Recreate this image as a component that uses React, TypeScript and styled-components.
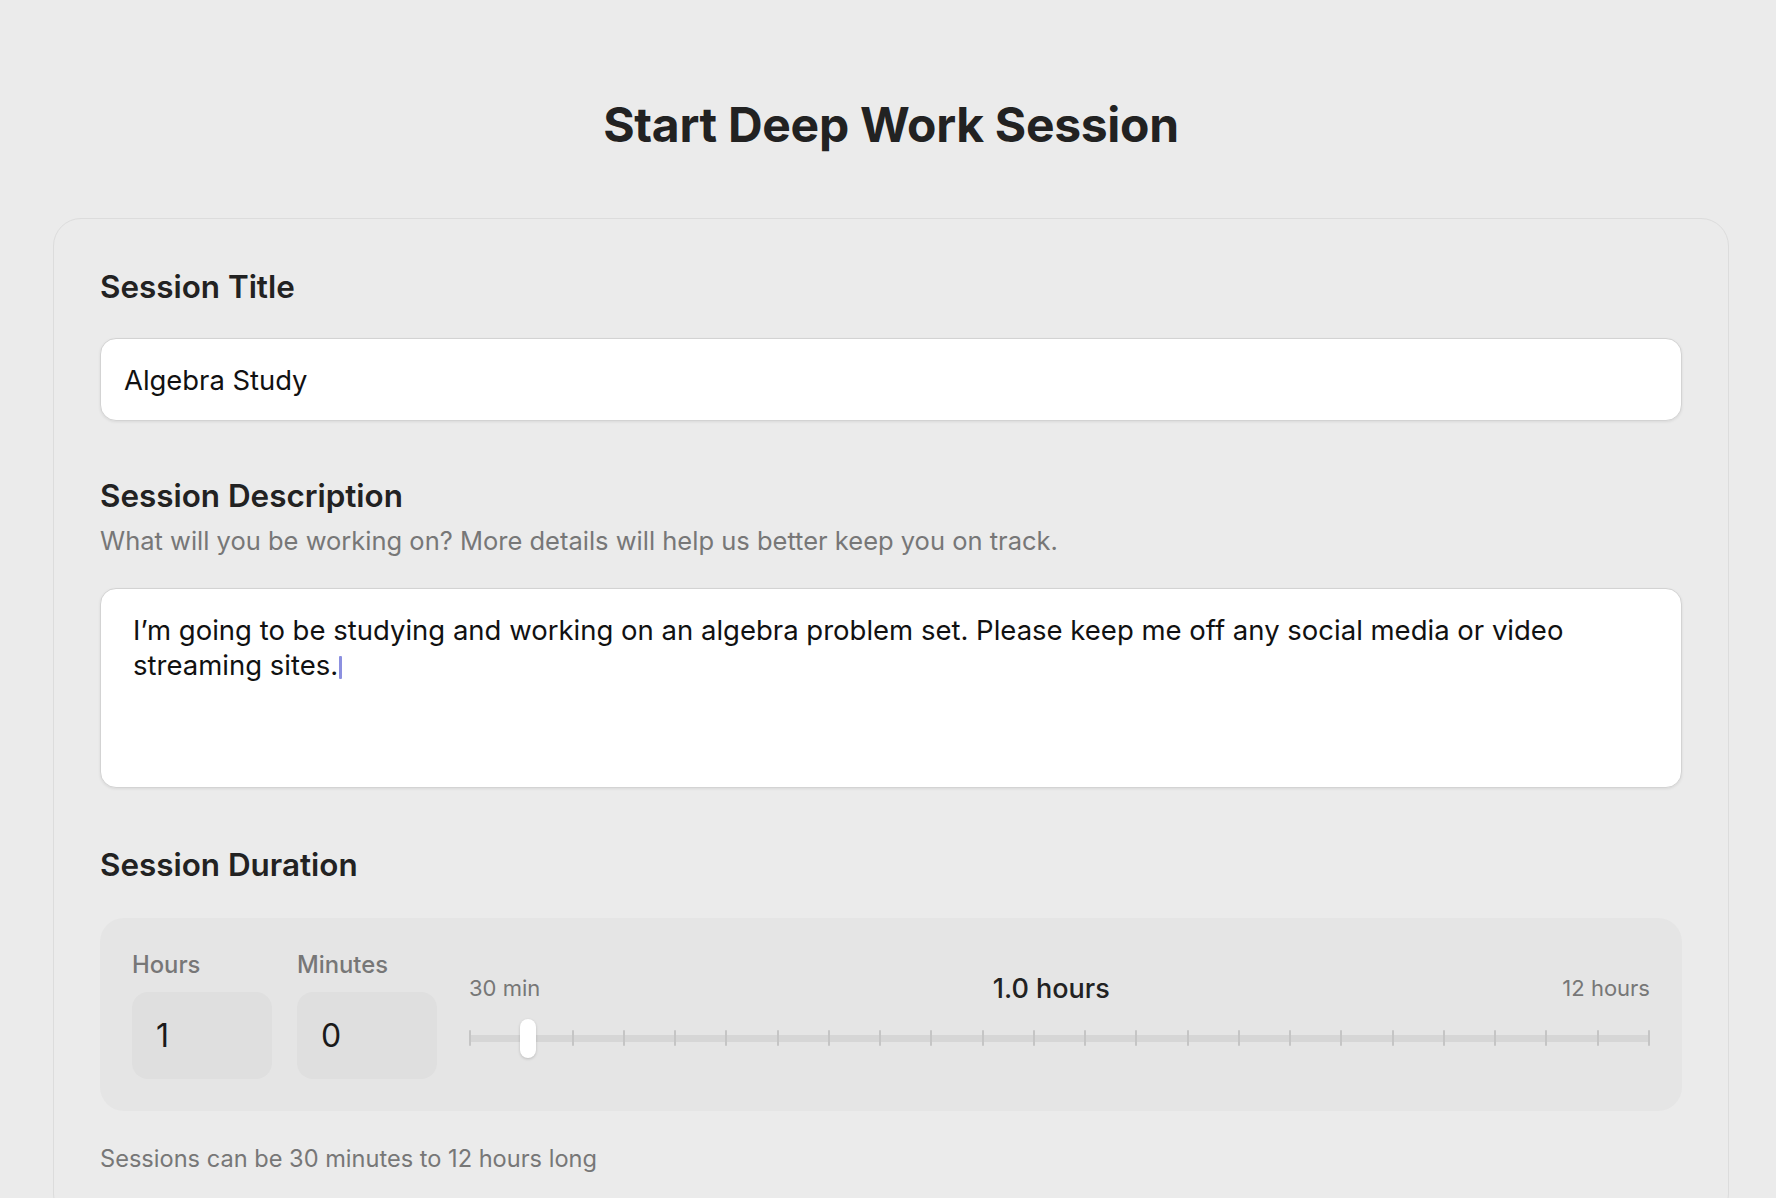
import React, { useState } from 'react';
import styled, { createGlobalStyle } from 'styled-components';

const GlobalStyle = createGlobalStyle`
  html, body {
    margin: 0;
    padding: 0;
    background: #ebebeb;
  }
  body {
    font-family: Inter, "Noto Sans", "Liberation Sans", sans-serif;
    color: #222;
    -webkit-font-smoothing: antialiased;
  }
  * {
    box-sizing: border-box;
  }
`;

const Page = styled.main`
  padding: 96px 47px 0 53px;
`;

const Heading = styled.h1`
  margin: 0;
  text-align: center;
  font-size: 48px;
  line-height: 58px;
  font-weight: 700;
  color: #222;
  letter-spacing: -0.3px;
`;

const Card = styled.section`
  margin-top: 64px;
  border: 1px solid #dcdcdc;
  border-radius: 28px;
  padding: 49px 46px 48px;
`;

const Field = styled.div<{ $gap?: number }>`
  margin-bottom: ${props => props.$gap ?? 56}px;
`;

const LabelBlock = styled.div<{ $space: number }>`
  margin-bottom: ${props => props.$space}px;
`;

const Label = styled.label`
  display: block;
  font-size: 31.4px;
  line-height: 38px;
  font-weight: 600;
  color: #222;
`;

const Hint = styled.p`
  margin: 11px 0 0;
  font-size: 25.5px;
  line-height: 29px;
  color: #777;
`;

const TextInput = styled.input`
  display: block;
  width: 100%;
  height: 83px;
  padding: 0 23px;
  border: 1px solid #d3d3d3;
  border-radius: 16px;
  background: #fff;
  box-shadow: 0 1px 3px rgba(0, 0, 0, 0.08);
  font: 400 27.4px/1 Inter, "Noto Sans", sans-serif;
  color: #111;
  outline: none;
`;

const TextArea = styled.div`
  min-height: 200px;
  padding: 24px 32px;
  border: 1px solid #d3d3d3;
  border-radius: 16px;
  background: #fff;
  box-shadow: 0 1px 3px rgba(0, 0, 0, 0.08);
  font-size: 27.5px;
  line-height: 34.5px;
  color: #111;
`;

const Caret = styled.span`
  display: inline-block;
  width: 3px;
  height: 23px;
  margin-left: 1px;
  vertical-align: -4px;
  border-radius: 1px;
  background: #8c90e0;
`;

const DurationPanel = styled.div`
  display: flex;
  align-items: center;
  padding: 32px;
  background: #e5e5e5;
  border-radius: 24px;
`;

const NumberGroup = styled.div`
  display: flex;
  gap: 25px;
`;

const NumberField = styled.div`
  display: flex;
  flex-direction: column;
  width: 140px;
`;

const SmallLabel = styled.label`
  font-size: 23.8px;
  line-height: 29px;
  font-weight: 500;
  color: #777;
  margin-bottom: 13px;
`;

const NumberBox = styled.input`
  width: 140px;
  height: 87px;
  padding: 0 24px;
  border: none;
  border-radius: 16px;
  background: #dfdfdf;
  font: 400 32px/1 Inter, "Noto Sans", sans-serif;
  color: #1a1a1a;
  outline: none;
`;

const SliderColumn = styled.div`
  flex: 1;
  margin-left: 32px;
`;

const SliderHead = styled.div`
  display: flex;
  justify-content: space-between;
  align-items: center;
  height: 33px;
  margin-bottom: 14px;
`;

const RangeEnd = styled.span`
  font-size: 22px;
  color: #777;
`;

const Current = styled.span`
  font-size: 27px;
  font-weight: 500;
  color: #222;
`;

const Track = styled.div`
  position: relative;
  display: flex;
  justify-content: space-between;
  align-items: center;
  height: 39px;
  background: linear-gradient(#d6d6d6, #d6d6d6) center / 100% 7px no-repeat;
`;

const Tick = styled.span`
  width: 2px;
  height: 16px;
  border-radius: 1px;
  background: #c5c5c5;
`;

const Thumb = styled.span`
  position: absolute;
  top: 0;
  width: 16px;
  height: 39px;
  border-radius: 8px;
  background: #fff;
  box-shadow: 0 1px 3px rgba(0, 0, 0, 0.18);
`;

const Footnote = styled.p`
  margin: 33px 0 0;
  font-size: 23.6px;
  line-height: 29px;
  color: #777;
`;

const STEPS = 24; // 30 min .. 12 h in half-hour steps

export default function App() {
  const [title, setTitle] = useState('Algebra Study');
  const [hours, setHours] = useState('1');
  const [minutes, setMinutes] = useState('0');

  const total = (Number(hours) || 0) + (Number(minutes) || 0) / 60;
  const index = Math.min(Math.max(Math.round(total * 2) - 1, 0), STEPS - 1);
  const frac = index / (STEPS - 1);

  return (
    <>
      <GlobalStyle />
      <Page>
        <Heading>Start Deep Work Session</Heading>
        <Card>
          <Field>
            <LabelBlock $space={32}>
              <Label htmlFor="title">Session Title</Label>
            </LabelBlock>
            <TextInput id="title" value={title} onChange={e => setTitle(e.target.value)} />
          </Field>

          <Field $gap={58}>
            <LabelBlock $space={33}>
              <Label>Session Description</Label>
              <Hint>What will you be working on? More details will help us better keep you on track.</Hint>
            </LabelBlock>
            <TextArea>
              I’m going to be studying and working on an algebra problem set. Please keep me off any social media or video streaming sites.<Caret />
            </TextArea>
          </Field>

          <Field $gap={0}>
            <LabelBlock $space={34}>
              <Label>Session Duration</Label>
            </LabelBlock>
            <DurationPanel>
              <NumberGroup>
                <NumberField>
                  <SmallLabel htmlFor="hours">Hours</SmallLabel>
                  <NumberBox id="hours" value={hours} onChange={e => setHours(e.target.value)} />
                </NumberField>
                <NumberField>
                  <SmallLabel htmlFor="minutes">Minutes</SmallLabel>
                  <NumberBox id="minutes" value={minutes} onChange={e => setMinutes(e.target.value)} />
                </NumberField>
              </NumberGroup>
              <SliderColumn>
                <SliderHead>
                  <RangeEnd>30 min</RangeEnd>
                  <Current>{total.toFixed(1)} hours</Current>
                  <RangeEnd>12 hours</RangeEnd>
                </SliderHead>
                <Track>
                  {Array.from({ length: STEPS }, (_, i) => (
                    <Tick key={i} />
                  ))}
                  <Thumb style={{ left: `calc((100% - 16px) * ${frac})` }} />
                </Track>
              </SliderColumn>
            </DurationPanel>
            <Footnote>Sessions can be 30 minutes to 12 hours long</Footnote>
          </Field>
        </Card>
      </Page>
    </>
  );
}
